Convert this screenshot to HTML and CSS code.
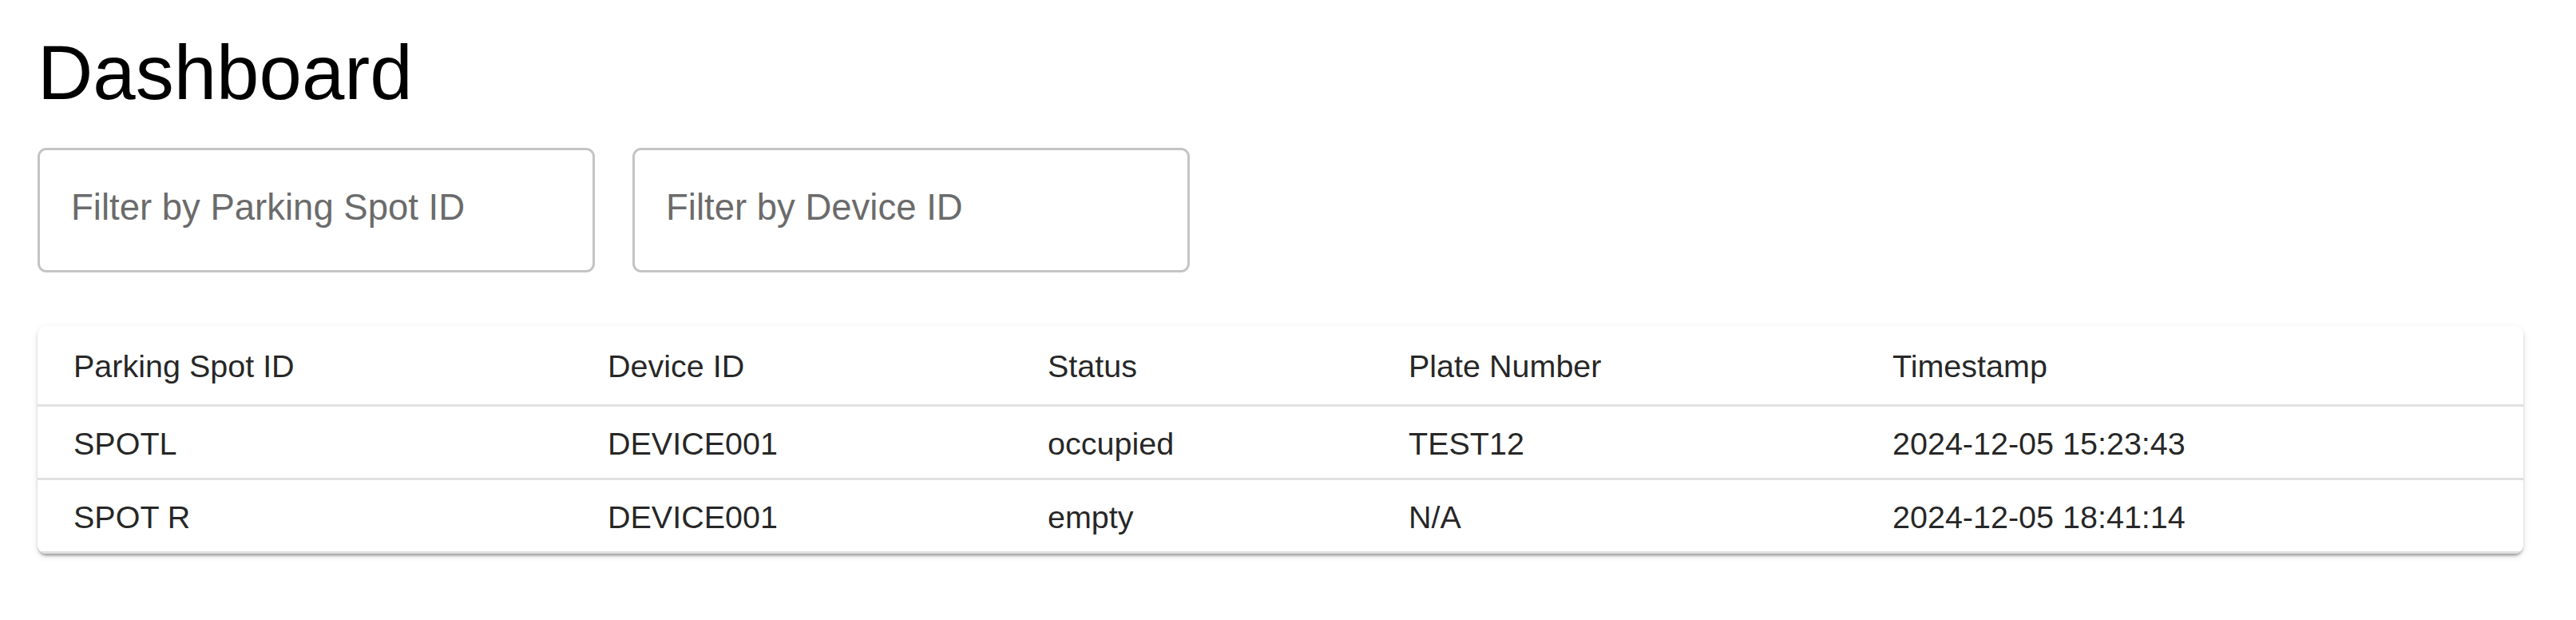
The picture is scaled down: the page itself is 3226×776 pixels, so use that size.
FILE: index.html
```html
<!DOCTYPE html>
<html lang="en">
<head>
<meta charset="utf-8">
<title>Dashboard</title>
<link rel="stylesheet" href="styles.css">
</head>
<body>
<main class="page">
  <h1 class="title">Dashboard</h1>
  <div class="filters">
    <input class="filter" type="text" placeholder="Filter by Parking Spot ID">
    <input class="filter" type="text" placeholder="Filter by Device ID">
  </div>
  <div class="paper">
    <table class="grid">
      <colgroup>
        <col class="c1"><col class="c2"><col class="c3"><col class="c4"><col class="c5">
      </colgroup>
      <thead>
        <tr>
          <th>Parking Spot ID</th>
          <th>Device ID</th>
          <th>Status</th>
          <th>Plate Number</th>
          <th>Timestamp</th>
        </tr>
      </thead>
      <tbody>
        <tr>
          <td>SPOTL</td>
          <td>DEVICE001</td>
          <td>occupied</td>
          <td>TEST12</td>
          <td>2024-12-05 15:23:43</td>
        </tr>
        <tr>
          <td>SPOT R</td>
          <td>DEVICE001</td>
          <td>empty</td>
          <td>N/A</td>
          <td>2024-12-05 18:41:14</td>
        </tr>
      </tbody>
    </table>
  </div>
</main>
</body>
</html>
```
FILE: styles.css
```css
html, body {
  margin: 0;
  padding: 0;
  background: #ffffff;
}

body {
  font-family: "Liberation Sans", Arial, Helvetica, sans-serif;
  color: rgba(0, 0, 0, 0.87);
}

.page {
  padding: 32px 66px 40px 47px;
}

.title {
  margin: 0 0 35px;
  font-size: 96px;
  font-weight: 400;
  line-height: 118px;
  color: #000000;
}

.filters {
  display: flex;
  gap: 47px;
  margin-bottom: 67px;
}

.filter {
  box-sizing: border-box;
  width: 698px;
  height: 156px;
  margin: 0;
  padding: 0 39px 7px;
  border: 3px solid #c4c4c4;
  border-radius: 11px;
  background: #ffffff;
  font-family: "Liberation Sans", Arial, Helvetica, sans-serif;
  font-size: 45.5px;
  color: rgba(0, 0, 0, 0.87);
  outline: none;
}

.filter::placeholder {
  color: #6b6b6b;
  opacity: 1;
}

.paper {
  width: 3113px;
  background: #ffffff;
  border-radius: 11px;
  overflow: hidden;
  box-shadow:
    0 5px 3px -3px rgba(0, 0, 0, 0.2),
    0 3px 3px 0 rgba(0, 0, 0, 0.14),
    0 3px 8px 0 rgba(0, 0, 0, 0.12);
}

.grid {
  width: 100%;
  border-collapse: collapse;
  table-layout: fixed;
  font-size: 39.5px;
}

.c1 { width: 669px; }
.c2 { width: 551px; }
.c3 { width: 452px; }
.c4 { width: 606px; }
.c5 { width: auto; }

.grid th,
.grid td {
  text-align: left;
  font-weight: 400;
  padding: 4px 45px 0;
  line-height: 85px;
  border-bottom: 3px solid #e0e0e0;
  white-space: nowrap;
  color: rgba(0, 0, 0, 0.87);
}

.grid th {
  padding-top: 3px;
  line-height: 95px;
}
```
